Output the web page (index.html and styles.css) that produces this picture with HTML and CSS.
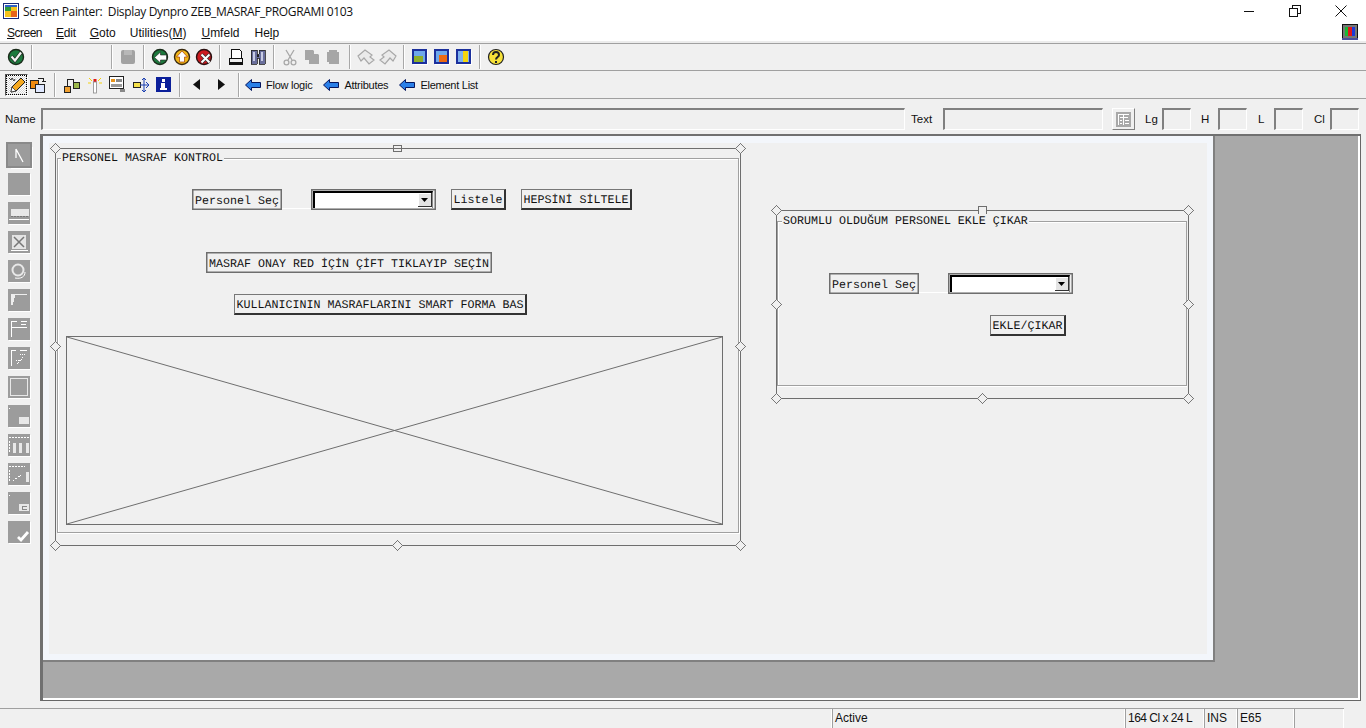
FILE: index.html
```html
<!DOCTYPE html>
<html lang="en">
<head>
<meta charset="utf-8">
<title>Screen Painter</title>
<link rel="stylesheet" href="styles.css">
</head>
<body>
<div class="app">
  <header class="titlebar">
    <svg class="app-icon" width="16" height="16" viewBox="0 0 16 16" shape-rendering="crispEdges"><rect x="0.5" y="0.5" width="15" height="15" fill="#fff" stroke="#1a2a7a"/><rect x="2" y="2" width="6" height="6" fill="#2f9a3a"/><rect x="8" y="2" width="6" height="6" fill="#f6c21c"/><rect x="2" y="8" width="6" height="6" fill="#f6c21c"/><rect x="8" y="8" width="6" height="6" fill="#e8641b"/><rect x="2" y="2" width="12" height="2" fill="#2f62c4"/></svg>
    <span class="title-text">Screen Painter:&nbsp; Display Dynpro ZEB_MASRAF_PROGRAMI 0103</span>
    <div class="winctl">
      <svg width="12" height="12" viewBox="0 0 12 12"><path d="M1 6.500h10" stroke="#111"/></svg>
      <svg width="12" height="12" viewBox="0 0 12 12" shape-rendering="crispEdges"><path d="M3.500 3V.5h8v8H9M.5 3.500h8v8h-8z" fill="none" stroke="#111"/></svg>
      <svg width="12" height="12" viewBox="0 0 12 12"><path d="M.5.5l11 11M11.500.5l-11 11" stroke="#111"/></svg>
    </div>
  </header>

  <nav class="menubar">
    <span class="m-screen"><u>S</u>creen</span><span class="m-edit"><u>E</u>dit</span><span><u>G</u>oto</span><span class="m-util">Utilities(<u>M</u>)</span><span class="m-umf"><u>U</u>mfeld</span><span>He<u>l</u>p</span>
    <svg class="monitor" width="16" height="16" viewBox="0 0 16 16" shape-rendering="crispEdges"><rect x="0.5" y="0.5" width="15" height="14" fill="#777" stroke="#111"/><rect x="3" y="3" width="3" height="9" fill="#19b934"/><rect x="6" y="3" width="4" height="9" fill="#e01818"/><rect x="10" y="3" width="3" height="9" fill="#1c3ad8"/><rect x="0" y="14" width="16" height="2" fill="#4a4f9a"/></svg>
  </nav>

  <div class="toolbar tb-first">
    <span class="ic"><svg width="18" height="18" viewBox="0 0 18 18"><circle cx="9" cy="9" r="7.500" fill="#1d7a3e" stroke="#1a2a1a" stroke-width="1.400"/><path d="M4.500 8.500l3.500 4L14 4.500" fill="none" stroke="#222" stroke-width="3.600"/><path d="M4.500 8.500l3.500 4L14 4.500" fill="none" stroke="#f2f6f2" stroke-width="2.200"/></svg></span>
    <span class="sep"></span><span class="blank"></span><span class="sep"></span>
    <span class="ic"><svg width="16" height="16" viewBox="0 0 16 16"><rect x="1" y="1" width="14" height="14" rx="2" fill="#a2a2a2"/><rect x="4" y="1" width="8" height="5" fill="#b8b8b8"/></svg></span>
    <span class="sep"></span>
    <span class="ic"><svg width="18" height="18" viewBox="0 0 18 18"><circle cx="9" cy="9" r="7.500" fill="#1d7a3e" stroke="#1a2a1a" stroke-width="1.400"/><path d="M3.500 9.500L9.500 4v3h6v5h-6v3z" fill="#fff" stroke="#222" stroke-width=".6"/></svg></span>
    <span class="ic"><svg width="18" height="18" viewBox="0 0 18 18"><circle cx="9" cy="9" r="7.500" fill="#f2b516" stroke="#3a2a10" stroke-width="1.400"/><path d="M9 3l5.500 6H11.500v5h-5V9H3.500z" fill="#fff" stroke="#a33c00" stroke-width=".7"/></svg></span>
    <span class="ic"><svg width="18" height="18" viewBox="0 0 18 18"><circle cx="9" cy="9" r="7.500" fill="#cc1a1f" stroke="#2a1010" stroke-width="1.400"/><path d="M6.500 6.500l8 8M14.500 6.500l-8 8" stroke="#333" stroke-width="3.400"/><path d="M6.500 6.500l8 8M14.500 6.500l-8 8" stroke="#fff" stroke-width="2"/></svg></span>
    <span class="sep"></span>
    <span class="ic"><svg width="16" height="16" viewBox="0 0 16 16" shape-rendering="crispEdges"><path d="M3.500.5h8l2 2v7h-10z" fill="#fff" stroke="#111"/><path d="M1.500 9.500h13v4h-13z" fill="#eee" stroke="#111"/><path d="M1 14h14v1.500H1z" fill="#111"/></svg></span>
    <span class="ic"><svg width="16" height="16" viewBox="0 0 16 16" shape-rendering="crispEdges"><path d="M1 1h6v4h2V1h6v14H9V9H7v6H1z" fill="#6a6f9c" stroke="#222" stroke-width=".8"/><path d="M3 3h2v9H3zM11 3h2v9h-2z" fill="#c8cce4"/><path d="M7 6h2v2H7z" fill="#222"/></svg></span>
    <span class="sep"></span>
    <span class="ic"><svg width="16" height="17" viewBox="0 0 16 17" fill="none" stroke="#a8a8a8" stroke-width="1.300"><path d="M4 1l6 10M12 1L6 11"/><circle cx="4.500" cy="13.500" r="2.400"/><circle cx="11.500" cy="13.500" r="2.400"/></svg></span>
    <span class="ic"><svg width="16" height="16" viewBox="0 0 16 16" fill="#a6a6a6"><path d="M1 1h8l1 1v9H1z"/><path d="M5 5h9l1 1v9H5z"/></svg></span>
    <span class="ic"><svg width="16" height="16" viewBox="0 0 16 16" fill="#a6a6a6"><path d="M3 1h8v2h2v12H3z"/><path d="M1 3h9v10H1z"/></svg></span>
    <span class="sep"></span>
    <span class="ic"><svg width="18" height="16" viewBox="0 0 18 16"><path d="M1 7l7-6 7 5-2 2 4 3-5 4-5-6-3 3z" fill="#eaeaea" stroke="#a8a8a8" stroke-width="1.200"/></svg></span>
    <span class="ic"><svg width="18" height="16" viewBox="0 0 18 16"><path d="M17 7l-7-6-7 5 2 2-4 3 5 4 5-6 3 3z" fill="#eaeaea" stroke="#a8a8a8" stroke-width="1.200"/></svg></span>
    <span class="sep"></span>
    <span class="ic"><svg width="16" height="16" viewBox="0 0 16 16" shape-rendering="crispEdges"><rect x="1" y="1" width="15" height="15" fill="#fff"/><rect width="15" height="15" fill="#1b2f9c"/><rect x="2" y="2" width="11" height="11" fill="#6ea8ea"/><rect x="2" y="7" width="9" height="6" fill="#8eb02a"/></svg></span>
    <span class="ic"><svg width="16" height="16" viewBox="0 0 16 16" shape-rendering="crispEdges"><rect x="1" y="1" width="15" height="15" fill="#fff"/><rect width="15" height="15" fill="#1b2f9c"/><rect x="2" y="2" width="11" height="11" fill="#6ea8ea"/><rect x="5" y="6" width="8" height="7" fill="#ee6a12"/></svg></span>
    <span class="ic"><svg width="16" height="16" viewBox="0 0 16 16" shape-rendering="crispEdges"><rect x="1" y="1" width="15" height="15" fill="#fff"/><rect width="15" height="15" fill="#1b2f9c"/><rect x="2" y="2" width="11" height="11" fill="#7eb2ee"/><rect x="7" y="2" width="5" height="11" fill="#f4d60e"/></svg></span>
    <span class="sep"></span>
    <span class="ic"><svg width="18" height="18" viewBox="0 0 18 18"><circle cx="9" cy="9" r="7.500" fill="#f7e23a" stroke="#222" stroke-width="1.200"/><path d="M6 7c0-4 6-4 6 0 0 2-3 2-3 4.500" fill="none" stroke="#222" stroke-width="2"/><rect x="8" y="13" width="2" height="2" fill="#222"/></svg></span>
  </div>

  <div class="toolbar tb-second">
    <span class="ic pressed"><svg width="18" height="18" viewBox="0 0 18 18"><path d="M3 16l1-5L13 2l4 4-9 9z" fill="#f4a820" stroke="#222"/><path d="M3 16l1-5 4 4z" fill="#fff" stroke="#222" stroke-width=".7"/><path d="M1 2l2 2 1-2 2 3 1-2" fill="none" stroke="#333"/></svg></span>
    <span class="ic"><svg width="18" height="18" viewBox="0 0 18 18" shape-rendering="crispEdges"><rect x="1.500" y="4.500" width="8" height="8" fill="#ef8a10" stroke="#222"/><rect x="6.500" y="8.500" width="9" height="8" fill="#dfe8ff" stroke="#222"/><path d="M9 2.500h5.500V6M12.500 5h4" fill="none" stroke="#222"/></svg></span>
    <span class="sep sep-wide"></span>
    <span class="ic ic23"><svg width="16" height="16" viewBox="0 0 16 16" shape-rendering="crispEdges"><rect x=".5" y="9.500" width="6" height="6" fill="#f0a030" stroke="#222"/><rect x="9.500" y="5.500" width="6" height="6" fill="#9cb84a" stroke="#222"/><path d="M3.500 9V2.500h6V5" fill="none" stroke="#222"/></svg></span>
    <span class="ic ic23"><svg width="16" height="18" viewBox="0 0 16 18"><path d="M2 2l3 3M14 2l-3 3M1 7h3M12 7h3" stroke="#f4d10e"/><rect x="6.500" y="3" width="3" height="3" fill="#e01818"/><rect x="6.500" y="6" width="3" height="11" fill="#fff" stroke="#888" stroke-width=".8"/></svg></span>
    <span class="ic ic23"><svg width="17" height="17" viewBox="0 0 17 17" shape-rendering="crispEdges"><rect x=".5" y=".5" width="14" height="12" fill="#fff" stroke="#222"/><rect x="2" y="3" width="4" height="3" fill="#e8941c"/><rect x="7" y="3" width="6" height="3" fill="#888"/><rect x="2" y="8" width="11" height="3" fill="#999"/><rect x="11" y="13" width="5" height="3" fill="#888"/></svg></span>
    <span class="ic ic23"><svg width="18" height="16" viewBox="0 0 18 16"><rect x="1.500" y="5.500" width="7" height="5" fill="#f4e04a" stroke="#222"/><path d="M8 8h9M14 5l3 3-3 3M12 1v14M10 3l2-2 2 2M10 13l2 2 2-2" fill="none" stroke="#1b3fb0"/></svg></span>
    <span class="ic ic23"><svg width="15" height="15" viewBox="0 0 15 15" shape-rendering="crispEdges"><rect width="15" height="15" fill="#0b1f9a"/><rect x="6" y="2" width="3" height="3" fill="#fff"/><rect x="5" y="6" width="4" height="5" fill="#fff"/><rect x="4" y="11" width="7" height="2" fill="#fff"/></svg></span>
    <span class="sep sep-nav"></span>
    <span class="ic ic25"><svg width="7" height="11" viewBox="0 0 7 11"><path d="M7 0v11L0 5.500z" fill="#111"/></svg></span>
    <span class="ic ic25"><svg width="7" height="11" viewBox="0 0 7 11"><path d="M0 0v11l7-5.500z" fill="#111"/></svg></span>
    <span class="sep sep-nav"></span>
    <span class="link first-link"><svg width="16" height="12" viewBox="0 0 16 12"><path d="M.5 6L6.500.5v3H15.500v5H6.500v3z" fill="#2a7fe8" stroke="#06145c"/></svg>Flow logic</span>
    <span class="link"><svg width="16" height="12" viewBox="0 0 16 12"><path d="M.5 6L6.500.5v3H15.500v5H6.500v3z" fill="#2a7fe8" stroke="#06145c"/></svg>Attributes</span>
    <span class="link"><svg width="16" height="12" viewBox="0 0 16 12"><path d="M.5 6L6.500.5v3H15.500v5H6.500v3z" fill="#2a7fe8" stroke="#06145c"/></svg>Element List</span>
  </div>

  <div class="fieldrow">
    <span class="fl fl-name">Name</span><span class="field f-name"></span>
    <span class="fl fl-text">Text</span><span class="field f-text"></span>
    <span class="attr-btn"><svg width="15" height="15" viewBox="0 0 15 15" shape-rendering="crispEdges"><rect width="15" height="15" fill="#a8a8a8"/><path d="M2 2h11v1H2zM2 2h1v11H2zM7 2h1v11H7zM4 5h8v1H4zM9 8h4v1H9zM9 11h4v1H9zM4 8h2v1H4zM4 11h2v1H4z" fill="#fff"/></svg></span>
    <span class="fl fl-lg">Lg</span><span class="field f-sm"></span>
    <span class="fl fl-h">H</span><span class="field f-sm"></span>
    <span class="fl fl-l">L</span><span class="field f-sm"></span>
    <span class="fl fl-cl">Cl</span><span class="field f-sm"></span>
  </div>

  <main class="main">
    <aside class="palette">
      <span class="tool tool-on"><svg width="22" height="22" viewBox="0 0 22 22" stroke="#fff" fill="none"><path d="M8 5v9M8 5l7 13" stroke-width="1.300"/></svg></span>
      <span class="tool"></span>
      <span class="tool"><svg width="22" height="22" viewBox="0 0 22 22" shape-rendering="crispEdges"><rect x="3" y="7" width="18" height="7" fill="#e8e8e8"/><path d="M3 14h18" stroke="#777" stroke-dasharray="2 1"/><path d="M1 17h20" stroke="#fff"/></svg></span>
      <span class="tool"><svg width="22" height="22" viewBox="0 0 22 22" shape-rendering="crispEdges"><rect x="4" y="4" width="14" height="14" fill="#e4e4e4"/><path d="M6 6l10 10M16 6L6 16" stroke="#777" stroke-width="1.500" shape-rendering="auto"/><path d="M3 19.500h17" stroke="#fff"/></svg></span>
      <span class="tool"><svg width="22" height="22" viewBox="0 0 22 22" fill="none"><circle cx="10" cy="10" r="5.500" stroke="#e8e8e8" stroke-width="2"/><path d="M17 12c0 5-4 7-10 6" stroke="#fff"/></svg></span>
      <span class="tool"><svg width="22" height="22" viewBox="0 0 22 22" shape-rendering="crispEdges"><path d="M3 16V5h16v1H7v3H6v4H5v3z" fill="#eee"/></svg></span>
      <span class="tool"><svg width="22" height="22" viewBox="0 0 22 22" shape-rendering="crispEdges"><path d="M3 19V3h6M13 3h6M3 9h16M13 6h5" fill="none" stroke="#fff"/></svg></span>
      <span class="tool"><svg width="22" height="22" viewBox="0 0 22 22" shape-rendering="crispEdges"><path d="M3 19V3h5M12 3h7" fill="none" stroke="#fff"/><path d="M9 17l8-9M12 7h6M8 13h3" fill="none" stroke="#fff" stroke-dasharray="1 1"/></svg></span>
      <span class="tool"><svg width="22" height="22" viewBox="0 0 22 22" shape-rendering="crispEdges"><path d="M2.500 19.500v-17h17v17z" fill="none" stroke="#e8e8e8"/></svg></span>
      <span class="tool"><svg width="22" height="22" viewBox="0 0 22 22" shape-rendering="crispEdges"><rect x="1" y="3" width="1" height="1" fill="#fff"/><rect x="11" y="12" width="10" height="7" fill="#e8e8e8"/></svg></span>
      <span class="tool"><svg width="22" height="22" viewBox="0 0 22 22" shape-rendering="crispEdges"><path d="M1 3.500h20M1.500 7v12" stroke="#fff" stroke-dasharray="2 1" fill="none"/><rect x="5" y="9" width="3" height="10" fill="#e8e8e8"/><rect x="11" y="9" width="3" height="10" fill="#e8e8e8"/><rect x="18" y="9" width="3" height="10" fill="#e8e8e8"/></svg></span>
      <span class="tool"><svg width="22" height="22" viewBox="0 0 22 22" shape-rendering="crispEdges"><path d="M1 3.500h16M1.500 7v12M5 18l8-6" stroke="#fff" stroke-dasharray="2 1" fill="none"/><rect x="18" y="9" width="3" height="10" fill="#e8e8e8"/></svg></span>
      <span class="tool"><svg width="22" height="22" viewBox="0 0 22 22" shape-rendering="crispEdges"><rect x="1" y="3" width="1" height="1" fill="#fff"/><rect x="11" y="12" width="10" height="7" fill="#e8e8e8"/><path d="M14 14h5v1h-4v2h4v1h-5z" fill="#888"/></svg></span>
      <span class="tool"><svg width="22" height="22" viewBox="0 0 22 22"><path d="M10 16l3 3 7-8" fill="none" stroke="#fff" stroke-width="2.800"/></svg></span>
    </aside>

    <section class="work">
      <div class="sheet">
        <svg class="overlay" width="1170" height="525" viewBox="43 136 1170 525">
          <g fill="none" shape-rendering="crispEdges">
            <rect class="frame" x="55.500" y="148.500" width="685" height="397"/>
            <rect class="groupw" x="58.500" y="159.500" width="681" height="374"/>
            <rect class="group" x="57.500" y="158.500" width="681" height="374"/>
            <rect class="frame" x="66.500" y="336.500" width="656" height="188"/>
            <rect class="frame" x="776.500" y="210.500" width="412" height="188"/>
            <rect class="groupw" x="778.500" y="222.500" width="408" height="164"/>
            <rect class="group" x="777.500" y="221.500" width="409" height="164"/>
            <rect class="frame" x="393.500" y="145.500" width="8" height="6"/>
            <rect class="hfill frame" x="978.500" y="206.500" width="8" height="8"/>
            <path class="white" d="M282 208.500h30M919 292.500h30"/>
          </g>
          <path class="frame" d="M67 337l655 187M722 337L67 524" fill="none"/>
          <g class="handles">
            <path d="M55.500 143.500l5 5-5 5-5-5z"/>
            <path d="M740.500 143.500l5 5-5 5-5-5z"/>
            <path d="M55.500 341.500l5 5-5 5-5-5z"/>
            <path d="M740.500 341.500l5 5-5 5-5-5z"/>
            <path d="M55.500 540.500l5 5-5 5-5-5z"/>
            <path d="M397.500 540.500l5 5-5 5-5-5z"/>
            <path d="M740.500 540.500l5 5-5 5-5-5z"/>
            <path d="M776.500 205.500l5 5-5 5-5-5z"/>
            <path d="M1188.500 205.500l5 5-5 5-5-5z"/>
            <path d="M776.500 299.500l5 5-5 5-5-5z"/>
            <path d="M1188.500 299.500l5 5-5 5-5-5z"/>
            <path d="M776.500 393.500l5 5-5 5-5-5z"/>
            <path d="M982.500 393.500l5 5-5 5-5-5z"/>
            <path d="M1188.500 393.500l5 5-5 5-5-5z"/>
          </g>
        </svg>

        <span class="mono gtitle gt-a">PERSONEL MASRAF KONTROL</span>
        <span class="mono lbl l-a">Personel Seç</span>
        <span class="combo c-a"><span class="combo-in"><span class="drop"><svg width="7" height="4" viewBox="0 0 7 4"><path d="M0 0h7L3.500 4z" fill="#000"/></svg></span></span></span>
        <span class="mono btn b-list">Listele</span>
        <span class="mono btn b-hep">HEPSİNİ SİLTELE</span>
        <span class="mono lbl l-mas">MASRAF ONAY RED İÇİN ÇİFT TIKLAYIP SEÇİN</span>
        <span class="mono btn b-kul">KULLANICININ MASRAFLARINI SMART FORMA BAS</span>

        <span class="mono gtitle gt-b">SORUMLU OLDUĞUM PERSONEL EKLE ÇIKAR</span>
        <span class="mono lbl l-b">Personel Seç</span>
        <span class="combo c-b"><span class="combo-in"><span class="drop"><svg width="7" height="4" viewBox="0 0 7 4"><path d="M0 0h7L3.500 4z" fill="#000"/></svg></span></span></span>
        <span class="mono btn b-ekle">EKLE/ÇIKAR</span>
      </div>
    </section>
  </main>

  <footer class="status">
    <span class="st st-main"></span>
    <span class="st st-active">Active</span>
    <span class="st st-size">164 Cl x 24 L</span>
    <span class="st st-ins">INS</span>
    <span class="st st-sys">E65</span>
    <span class="st st-end"></span>
  </footer>
</div>
</body>
</html>
```
FILE: styles.css
```css
* { box-sizing: border-box; }
html, body { margin: 0; height: 100%; overflow: hidden; }
body { font-family: "Liberation Sans", Arial, sans-serif; font-size: 11px; color: #111; background: #f0f0f0; }
.app { display: flex; flex-direction: column; width: 1366px; height: 728px; }

.titlebar { height: 22px; flex: none; background: #fff; display: flex; align-items: center; padding-left: 3px; }
.app-icon { flex: none; margin-right: 4px; }
.title-text { font-size: 12px; font-family: "Open Sans", sans-serif; letter-spacing: -0.35px; white-space: nowrap; }
.winctl { margin-left: auto; display: flex; gap: 34px; padding-right: 19px; align-items: center; }

.menubar { height: 22px; flex: none; background: #fff; display: flex; align-items: center; gap: 14px; padding: 1px 8px 0 7px; border-bottom: 1px solid #a0a0a0; box-shadow: inset 0 -2px 0 #ececec; font-size: 12px; }
.m-screen { letter-spacing: -0.5px; }
.m-edit { letter-spacing: -0.25px; }
.m-util { margin-right: 1px; }
.m-umf { margin-right: 1px; }
.monitor { margin-left: auto; margin-top: -2px; }

.toolbar { flex: none; display: flex; align-items: center; padding-left: 5px; border-bottom: 1px solid #a0a0a0; }
.tb-first { height: 27px; }
.tb-second { height: 28px; }
.ic { width: 22px; height: 22px; flex: none; display: flex; align-items: center; justify-content: center; }
.ic23 { width: 23px; }
.ic25 { width: 25px; }
.pressed { width: 23px; margin-right: -1px; border: 1px solid; border-color: #555 #fff #fff #555; background: repeating-conic-gradient(#fff 0 25%, #d8d8d8 0 50%) 0 0 / 2px 2px; outline: 1px dotted #000; outline-offset: -2px; }
.sep { width: 10px; height: 24px; flex: none; position: relative; }
.sep::before { content: ""; position: absolute; left: 4px; top: 0; bottom: 0; width: 1px; background: #a8a8a8; box-shadow: 1px 0 0 #fff; }
.sep-wide { width: 11px; }
.sep-wide::before { left: 5px; }
.sep-nav { width: 9px; }
.blank { width: 70px; flex: none; }
.link { display: flex; align-items: center; gap: 5px; margin-right: 11px; font-size: 11px; letter-spacing: -0.25px; white-space: nowrap; }
.first-link { margin-left: 2px; }

.fieldrow { flex: none; height: 35px; display: flex; align-items: center; padding: 5px 0 0 5px; }
.fl { flex: none; font-size: 11.5px; }
.fl-name { width: 27px; }
.field { flex: none; height: 22px; border-style: solid; border-width: 2px 1px 1px 2px; border-color: #808080 #fff #fff #808080; background: #f0f0f0; }
.f-name { width: 864px; margin-left: 9px; }
.fl-text { margin-left: 6px; width: 24px; }
.f-text { width: 160px; margin-left: 8px; }
.attr-btn { flex: none; width: 23px; height: 22px; margin: 0 10px 0 9px; display: flex; align-items: center; justify-content: center; border: 1px solid; border-color: #fff #808080 #808080 #fff; }
.f-sm { width: 29px; }
.fl-lg { width: 17px; }
.fl-h { margin-left: 10px; width: 17px; }
.fl-l { margin-left: 11px; width: 16px; }
.fl-cl { margin-left: 11px; width: 16px; }

.main { flex: 1; display: flex; min-height: 0; padding-bottom: 7px; }
.palette { width: 40px; flex: none; display: flex; flex-direction: column; align-items: center; gap: 7px; padding-top: 10px; padding-right: 2px; }
.tool { width: 22px; height: 22px; flex: none; background: #9c9c9c; box-shadow: 1px 1px 0 #fff; display: block; }
.tool svg { display: block; }
.tool-on { outline: 2px solid #8a8a8a; box-shadow: 3px 3px 0 #fff; }

.work { width: 1321px; flex: none; background: #a9a9a9; border-style: solid; border-width: 2px 1px 1px 3px; border-color: #707070 #666 #666 #707070; box-shadow: inset -2px -2px 0 #fff; }
.sheet { position: relative; width: 1172px; height: 526px; background: #f0f0f0; border-right: 2px solid #808080; border-bottom: 2px solid #808080; }
.sheet::before { content: ""; position: absolute; inset: 0; border: 6px solid #f3f6fb; border-top-width: 7px; }
.overlay { position: absolute; left: 0; top: 0; }
.frame { stroke: #6e6e6e; }
.group { stroke: #a0a0a0; }
.groupw { stroke: #fff; }
.white { stroke: #fff; }
.hfill { fill: #f0f0f0; }
.handles path { fill: #f0f0f0; stroke: #777; shape-rendering: crispEdges; }

.mono { position: absolute; font-family: "Liberation Mono", "Courier New", monospace; font-size: 11.67px; line-height: 17px; color: #111; white-space: pre; display: flex; align-items: center; justify-content: center; text-rendering: geometricPrecision; }
.gtitle { background: #f0f0f0; height: 14px; padding: 0 1px; }
.gt-a { left: 18px; top: 15px; }
.gt-b { left: 739px; top: 78px; }
.lbl { height: 21px; padding-top: 3px; border: 1px solid #6e6e6e; box-shadow: inset 0 0 0 .5px #6e6e6e; }
.btn { height: 21px; padding-top: 3px; background: #f0f0f0; border-style: solid; border-width: 1px 2px 2px 1px; border-color: #777 #333 #333 #777; }
.l-a { left: 149px; top: 53px; width: 90px; }
.b-list { left: 408px; top: 53px; width: 55px; }
.b-hep { left: 478px; top: 53px; width: 111px; }
.l-mas { left: 163px; top: 116px; width: 286px; }
.b-kul { left: 191px; top: 158px; width: 293px; }
.l-b { left: 786px; top: 137px; width: 90px; }
.b-ekle { left: 947px; top: 179px; width: 76px; }

.combo { position: absolute; height: 21px; width: 125px; background: #f0f0f0; border: 1px solid #6e6e6e; box-shadow: inset 0 0 0 .5px #6e6e6e; padding: 1px 2px 1px 1px; display: flex; }
.combo-in { flex: 1; background: #fff; border-style: solid; border-width: 2px 1px 0 2px; border-color: #000 #888 #000 #000; display: flex; justify-content: flex-end; }
.c-a { left: 268px; top: 53px; }
.c-b { left: 905px; top: 137px; }
.drop { width: 14px; height: 14px; background: #e4e4e4; border-right: 1px solid #333; border-bottom: 1px solid #333; box-shadow: inset 1px 1px 0 #fff; display: flex; align-items: center; justify-content: center; }

.status { flex: none; height: 20px; display: flex; font-size: 12px; }
.st { flex: none; height: 20px; border-style: solid; border-width: 1px 0 0 1px; border-color: #a0a0a0; box-shadow: inset -1px 0 0 #fff; padding: 2px 0 0 2px; white-space: nowrap; }
.st-main { width: 832px; border-left: 0; }
.st-active { width: 293px; }
.st-size { width: 79px; letter-spacing: -0.5px; }
.st-ins { width: 33px; }
.st-sys { width: 57px; }
.st-end { width: 50px; }
```
